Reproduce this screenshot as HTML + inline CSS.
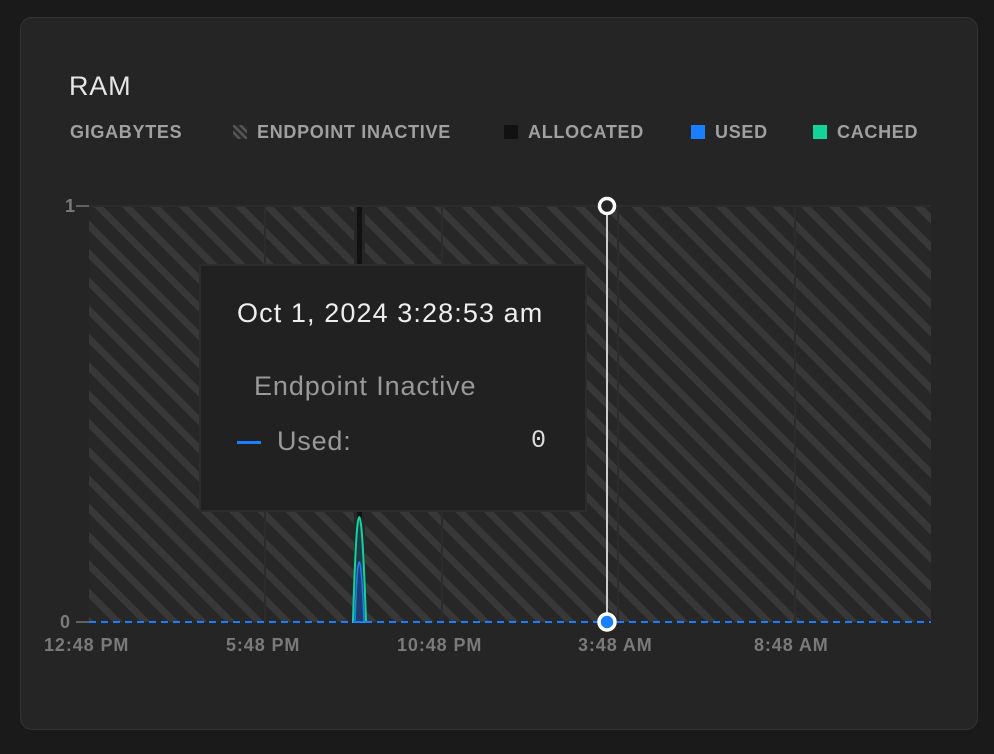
<!DOCTYPE html>
<html><head><meta charset="utf-8"><style>
html,body{margin:0;padding:0;background:#1a1a1a;width:994px;height:754px;overflow:hidden;font-family:"Liberation Sans",sans-serif}
.card{position:absolute;left:20px;top:17px;width:958px;height:713px;background:#252525;border:1px solid #333;border-radius:12px;box-sizing:border-box}
.t{position:absolute;color:#e6e6e6;white-space:nowrap}
.lg{position:absolute;top:122px;font-size:18px;font-weight:bold;color:#a0a0a0;letter-spacing:0.7px;white-space:nowrap}
.sw{display:inline-block;width:14px;height:14px;vertical-align:-1px;margin-right:10px}
.ax{position:absolute;font-size:18px;color:#7a7a7a;font-weight:bold;letter-spacing:0.9px;white-space:nowrap}
</style></head><body>
<div class="card"></div>
<div class="t" style="left:69px;top:71px;font-size:27px;letter-spacing:0.8px">RAM</div>
<div class="lg" style="left:70px">GIGABYTES</div>
<div class="lg" style="left:233px"><svg class="sw" viewBox="0 0 14 14"><rect width="14" height="14" fill="#2a2a2a"/><path d="M0 0L14 14M-7 0L7 14M7 0L21 14" stroke="#555" stroke-width="2.5"/></svg>ENDPOINT INACTIVE</div>
<div class="lg" style="left:504px"><span class="sw" style="background:#111"></span>ALLOCATED</div>
<div class="lg" style="left:691px"><span class="sw" style="background:#1a7fff"></span>USED</div>
<div class="lg" style="left:813px"><span class="sw" style="background:#12d49a"></span>CACHED</div>
<svg style="position:absolute;left:0;top:0" width="994" height="754">
<defs><pattern id="p" width="20" height="20" patternUnits="userSpaceOnUse" patternTransform="rotate(-45)"><rect width="20" height="20" fill="#272727"/><rect width="7" height="20" fill="#383838"/></pattern></defs>
<rect x="89" y="206" width="842" height="416" fill="url(#p)"/>
<rect x="354" y="206" width="11" height="416" fill="#262626"/>
<rect x="357" y="206" width="5" height="416" fill="#111"/>
<g stroke="#2c2c2c" stroke-width="2"><line x1="265" y1="206" x2="265" y2="622"/><line x1="442" y1="206" x2="442" y2="622"/><line x1="618" y1="206" x2="618" y2="622"/><line x1="795" y1="206" x2="795" y2="622"/><line x1="89" y1="206" x2="931" y2="206"/></g>
<line x1="76" y1="206" x2="89" y2="206" stroke="#777" stroke-width="1.5"/>
<line x1="76" y1="622" x2="89" y2="622" stroke="#777" stroke-width="1.5"/>
<path d="M353 622 Q359 412 366 622Z" fill="#1d3a4a" stroke="#12d49a" stroke-width="2"/>
<path d="M355 622 Q359 502 364 622Z" fill="#1e3f6b" stroke="#1a7fff" stroke-width="1.5"/>
<line x1="89" y1="622" x2="931" y2="622" stroke="#1a7fff" stroke-width="2" stroke-dasharray="7 5"/>
<rect x="200" y="265" width="386" height="246" fill="#212121" stroke="#2c2c2c" stroke-width="2"/>
<line x1="607" y1="206" x2="607" y2="622" stroke="#ccc" stroke-width="2"/>
<circle cx="607" cy="206" r="7.5" fill="#252525" stroke="#fff" stroke-width="3.5"/>
<circle cx="607" cy="622" r="8" fill="#1a7fff" stroke="#fff" stroke-width="3.5"/>
</svg>
<div class="ax" style="left:65px;top:196px">1</div>
<div class="ax" style="left:60px;top:612px">0</div>
<div class="ax" style="left:44px;top:635px">12:48 PM</div>
<div class="ax" style="left:226px;top:635px">5:48 PM</div>
<div class="ax" style="left:397px;top:635px">10:48 PM</div>
<div class="ax" style="left:578px;top:635px">3:48 AM</div>
<div class="ax" style="left:754px;top:635px">8:48 AM</div>
<div class="t" style="left:237px;top:298px;font-size:27px;letter-spacing:1.1px;color:#eee">Oct 1, 2024 3:28:53 am</div>
<div class="t" style="left:254px;top:371px;font-size:27px;letter-spacing:0.9px;color:#999">Endpoint Inactive</div>
<div style="position:absolute;left:237px;top:441px;width:24px;height:3px;background:#1a7fff"></div>
<div class="t" style="left:277px;top:426px;font-size:27px;letter-spacing:0.8px;color:#999">Used:</div>
<div class="t" style="left:531px;top:426px;font-size:25px;color:#ddd;font-family:'Liberation Mono',monospace">0</div>
</body></html>
